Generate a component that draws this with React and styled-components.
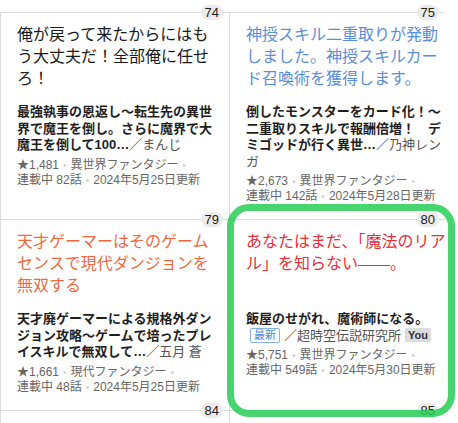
import React from 'react';
import styled, { createGlobalStyle } from 'styled-components';

const GlobalStyle = createGlobalStyle`
  body {
    margin: 0;
    background: #fff;
    font-family: "Liberation Sans", "Noto Sans CJK JP", sans-serif;
  }
`;

const works = [
    {
        rank: 74,
        title: '俺が戻って来たからにはもう大丈夫だ！全部俺に任せろ！',
        color: '#1a1a1a',
        summary: '最強執事の恩返し～転生先の異世界で魔王を倒し。さらに魔界で大魔王を倒して100…',
        author: 'まんじ',
        stars: '1,481',
        genre: '異世界ファンタジー',
        episodes: '連載中 82話',
        updated: '2024年5月25日更新',
    },
    {
        rank: 75,
        title: '神授スキル二重取りが発動しました。神授スキルカード召喚術を獲得します。',
        color: '#5b8ed8',
        summary: '倒したモンスターをカード化！～二重取りスキルで報酬倍増！　デミゴッドが行く異世…',
        author: '乃神レンガ',
        stars: '2,673',
        genre: '異世界ファンタジー',
        episodes: '連載中 142話',
        updated: '2024年5月28日更新',
    },
    {
        rank: 79,
        title: '天才ゲーマーはそのゲームセンスで現代ダンジョンを無双する',
        color: '#f2683f',
        summary: '天才廃ゲーマーによる規格外ダンジョン攻略～ゲームで培ったプレイスキルで無双して…',
        author: '五月 蒼',
        stars: '1,661',
        genre: '現代ファンタジー',
        episodes: '連載中 48話',
        updated: '2024年5月25日更新',
    },
    {
        rank: 80,
        title: 'あなたはまだ、「魔法のリアル」を知らない――。',
        color: '#e62f3c',
        summary: '飯屋のせがれ、魔術師になる。',
        author: '超時空伝説研究所',
        isNew: true,
        isYou: true,
        focused: true,
        stars: '5,751',
        genre: '異世界ファンタジー',
        episodes: '連載中 549話',
        updated: '2024年5月30日更新',
    },
    { rank: 84 },
    { rank: 85 },
];

const Grid = styled.div`
  display: grid;
  grid-template-columns: 229px 216px;
  margin-top: 12px;
`;

const Cell = styled.article`
  position: relative;
  min-height: ${( props ) => props.$empty ? '60px' : 'auto'};
  padding: 11px 0 15px 16px;
  border-top: 1px solid #dcdcdc;
  border-left: 1px solid #dcdcdc;
`;

const Rank = styled.span`
  position: absolute;
  top: -8px;
  right: 6px;
  z-index: 1;
  height: 15px;
  padding: 0 4px;
  border-radius: 8px;
  background: #ebebeb;
  color: #222;
  font-size: 13px;
  line-height: 15px;
`;

const FocusRing = styled.div`
  position: absolute;
  top: -16px;
  left: -3px;
  right: -10px;
  bottom: -7px;
  z-index: 2;
  border: 7px solid rgba(40, 205, 85, 0.85);
  border-radius: 22px;
  pointer-events: none;
`;

const Body = styled.div`
  width: 203px;
`;

const Title = styled.h2`
  min-height: 66px;
  margin: 0 0 14px;
  color: ${( props ) => props.$color};
  font: 400 16px/22px "Liberation Serif", "Noto Sans CJK JP", serif;
`;

const Summary = styled.p`
  margin: 0;
  color: #1e1e1e;
  font-size: 13px;
  font-weight: 700;
  line-height: 16.5px;
`;

const Author = styled.span`
  color: #555;
  font-weight: 400;
`;

const NewTag = styled.span`
  display: inline-block;
  margin: 0 4px;
  padding: 0 3px;
  border: 1px solid #85b3e6;
  border-radius: 2px;
  color: #4a89d2;
  font-size: 11px;
  font-weight: 400;
  line-height: 13px;
  vertical-align: 1px;
`;

const YouTag = styled.span`
  display: inline-block;
  margin-left: 4px;
  padding: 0 3px;
  border-radius: 2px;
  background: #dcdcdc;
  color: #333;
  font-size: 11px;
  font-weight: 700;
  line-height: 14px;
  vertical-align: 1px;
`;

const Meta = styled.div`
  margin-top: 4px;
  color: #666;
  font-size: 12px;
  line-height: 15px;
`;

const Dot = styled.span`
  margin: 0 4px;
  color: #d2d2d2;
  font-size: 10px;
`;

const WorkCell = ( { work } ) => {
    if ( !work.title ) {
        return (
            <Cell $empty>
                <Rank>{work.rank}</Rank>
            </Cell>
        );
    }

    return (
        <Cell>
            <Rank>{work.rank}</Rank>
            {work.focused && <FocusRing />}
            <Body>
                <Title $color={work.color}>{work.title}</Title>
                <Summary>
                    {work.summary}
                    {work.isNew && <NewTag>最新</NewTag>}
                    <Author>／{work.author}</Author>
                    {work.isYou && <YouTag>You</YouTag>}
                </Summary>
                <Meta>
                    <div>
                        ★{work.stars}<Dot>•</Dot>{work.genre}<Dot>•</Dot>
                    </div>
                    <div>
                        {work.episodes}<Dot>•</Dot>{work.updated}
                    </div>
                </Meta>
            </Body>
        </Cell>
    );
};

const App = () => {
    return (
        <>
            <GlobalStyle />
            <Grid>
                {works.map( ( work ) => <WorkCell key={work.rank} work={work} /> )}
            </Grid>
        </>
    );
};

export default App;
